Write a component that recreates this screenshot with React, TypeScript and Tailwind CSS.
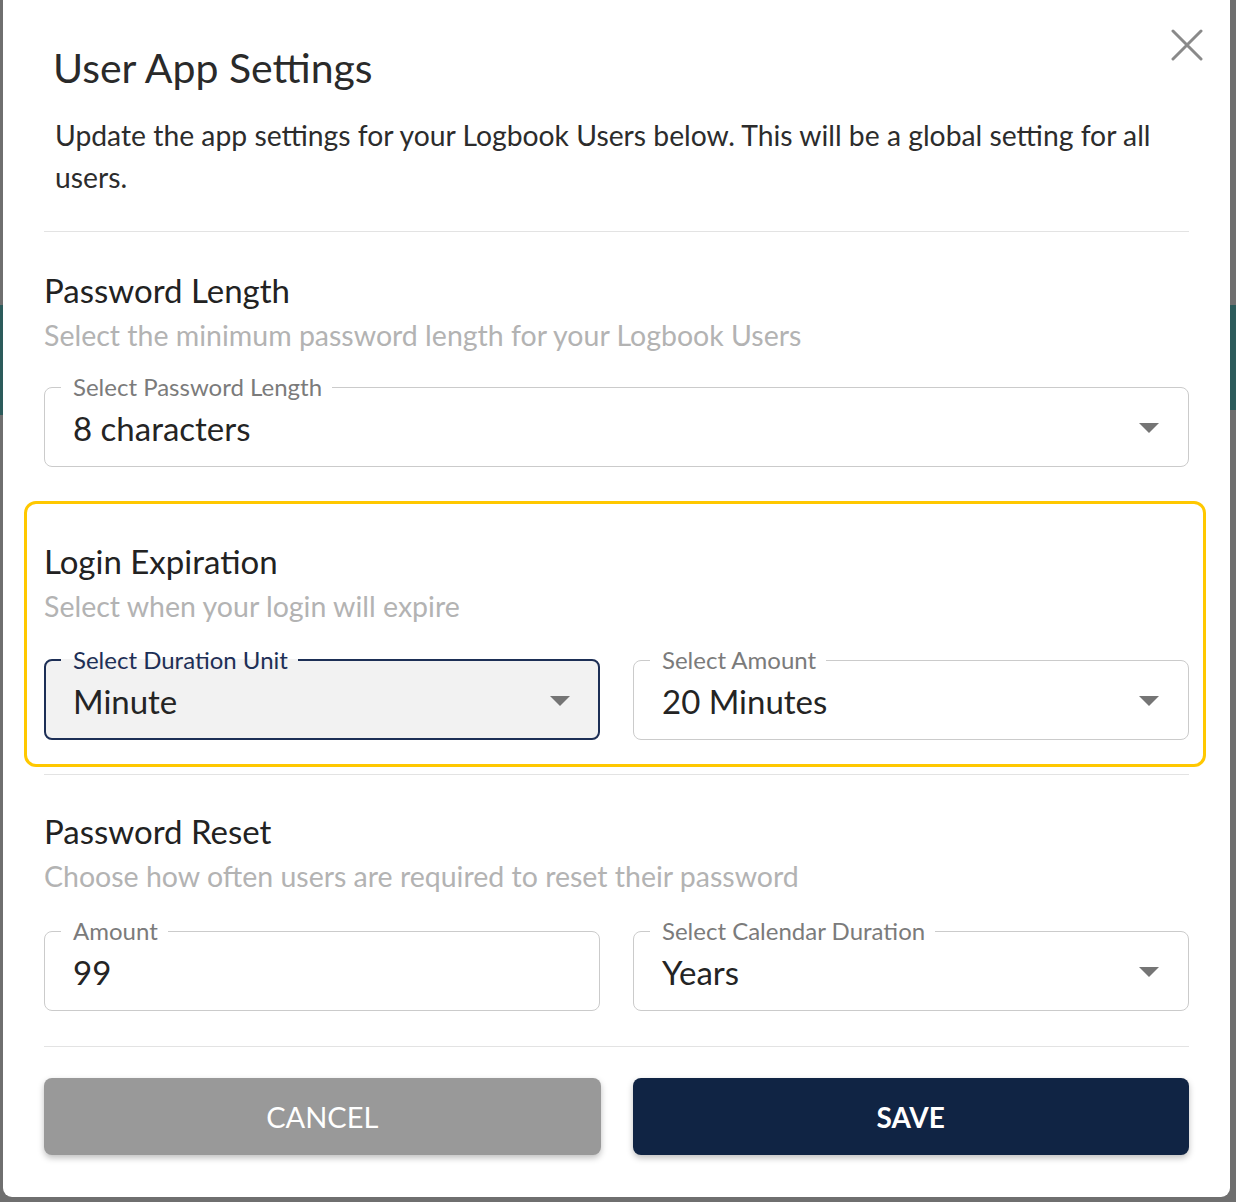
import React from "react";

const font = { fontFamily: "Lato, 'Open Sans', sans-serif" };

function Arrow() {
  return (
    <svg width="20" height="10" viewBox="0 0 20 10" className="shrink-0">
      <path d="M0 0 L20 0 L10 10 Z" fill="#757575" />
    </svg>
  );
}

interface FieldProps {
  label: string;
  value: string;
  select?: boolean;
  focused?: boolean;
}

function Field({ label, value, select = true, focused = false }: FieldProps) {
  return (
    <fieldset
      className={
        focused
          ? "rounded-[8px] border-2 border-[#1d2f56] bg-[#f2f2f2] pb-[9px]"
          : "rounded-[8px] border border-[#cbcbcb] bg-white pb-[10px]"
      }
    >
      <legend
        className={
          focused
            ? "ml-[15px] pl-[12px] pr-[10px] text-[24px] leading-[26px] text-[#1d2f56]"
            : "ml-[16px] pl-[12px] pr-[10px] text-[24px] leading-[26px] text-[#7b7b7b]"
        }
      >
        {label}
      </legend>
      <div
        className={
          focused
            ? "flex h-[56px] items-center justify-between pl-[27px] pr-[28px]"
            : "flex h-[56px] items-center justify-between pl-[28px] pr-[29px]"
        }
      >
        <span className="text-[33px] leading-[40px] text-[#242424]">{value}</span>
        {select && <Arrow />}
      </div>
    </fieldset>
  );
}

function SectionHead({ title, sub }: { title: string; sub: string }) {
  return (
    <>
      <h3 className="text-[33px] leading-[40px] text-[#222]">{title}</h3>
      <p className="mt-[7px] text-[28.5px] leading-[36px] text-[#b3b3b3]">{sub}</p>
    </>
  );
}

export default function App() {
  return (
    <div className="flex min-h-[1202px] bg-[#6f6f6f]" style={font}>
      {/* backdrop edge */}
      <div className="flex w-[3px] flex-col">
        <div className="h-[305px]" />
        <div className="h-[110px] bg-[#2c5b5b]" />
      </div>

      <div className="relative h-[1197px] w-[1227px] rounded-b-[9px] bg-white pl-[41px] pr-[41px] pt-[45px]">
        <button
          className="absolute right-[27px] top-[29px] h-[32px] w-[32px]"
          aria-label="Close"
        >
          <svg width="32" height="32" viewBox="0 0 32 32">
            <path d="M2 2 L30 30 M30 2 L2 30" stroke="#8a8a8a" strokeWidth="3" strokeLinecap="round" />
          </svg>
        </button>

        {/* Header */}
        <div className="pl-[9px]">
          <h2 className="text-[41px] leading-[46px] text-[#2a2a2a]">User App Settings</h2>
          <p className="mt-[23px] pl-[2px] text-[28.3px] leading-[42px] text-[#2c2c2c]">
            Update the app settings for your Logbook Users below. This will be a global setting for all users.
          </p>
        </div>

        <div className="mt-[33px] h-px bg-[#e3e3e3]" />

        {/* Password Length */}
        <div className="mt-[38px]">
          <SectionHead
            title="Password Length"
            sub="Select the minimum password length for your Logbook Users"
          />
          <div className="mt-[21px]">
            <Field label="Select Password Length" value="8 characters" />
          </div>
        </div>

        {/* Login Expiration (highlighted) */}
        <div className="-ml-[20px] -mr-[17px] mt-[34px] rounded-[12px] border-[3px] border-[#ffc800] pb-[24px] pl-[17px] pr-[14px] pt-[37px]">
          <SectionHead title="Login Expiration" sub="Select when your login will expire" />
          <div className="mt-[23px] grid grid-cols-2 gap-[33px]">
            <Field label="Select Duration Unit" value="Minute" focused />
            <Field label="Select Amount" value="20 Minutes" />
          </div>
        </div>

        <div className="mt-[7px] h-px bg-[#e3e3e3]" />

        {/* Password Reset */}
        <div className="mt-[36px]">
          <SectionHead
            title="Password Reset"
            sub="Choose how often users are required to reset their password"
          />
          <div className="mt-[24px] grid grid-cols-2 gap-[33px]">
            <Field label="Amount" value="99" select={false} />
            <Field label="Select Calendar Duration" value="Years" />
          </div>
        </div>

        <div className="mt-[35px] h-px bg-[#e3e3e3]" />

        {/* Actions */}
        <div className="mt-[31px] grid grid-cols-2 gap-[32px]">
          <button className="h-[77px] rounded-[8px] bg-[#999999] text-[29px] uppercase text-white shadow-[0_3px_6px_rgba(0,0,0,0.25)]">
            Cancel
          </button>
          <button className="h-[77px] rounded-[8px] bg-[#102444] text-[28px] font-bold uppercase text-white shadow-[0_3px_6px_rgba(0,0,0,0.25)]">
            Save
          </button>
        </div>
      </div>

      <div className="flex w-[6px] flex-col">
        <div className="h-[305px]" />
        <div className="h-[105px] bg-[#2c5b5b]" />
      </div>
    </div>
  );
}
